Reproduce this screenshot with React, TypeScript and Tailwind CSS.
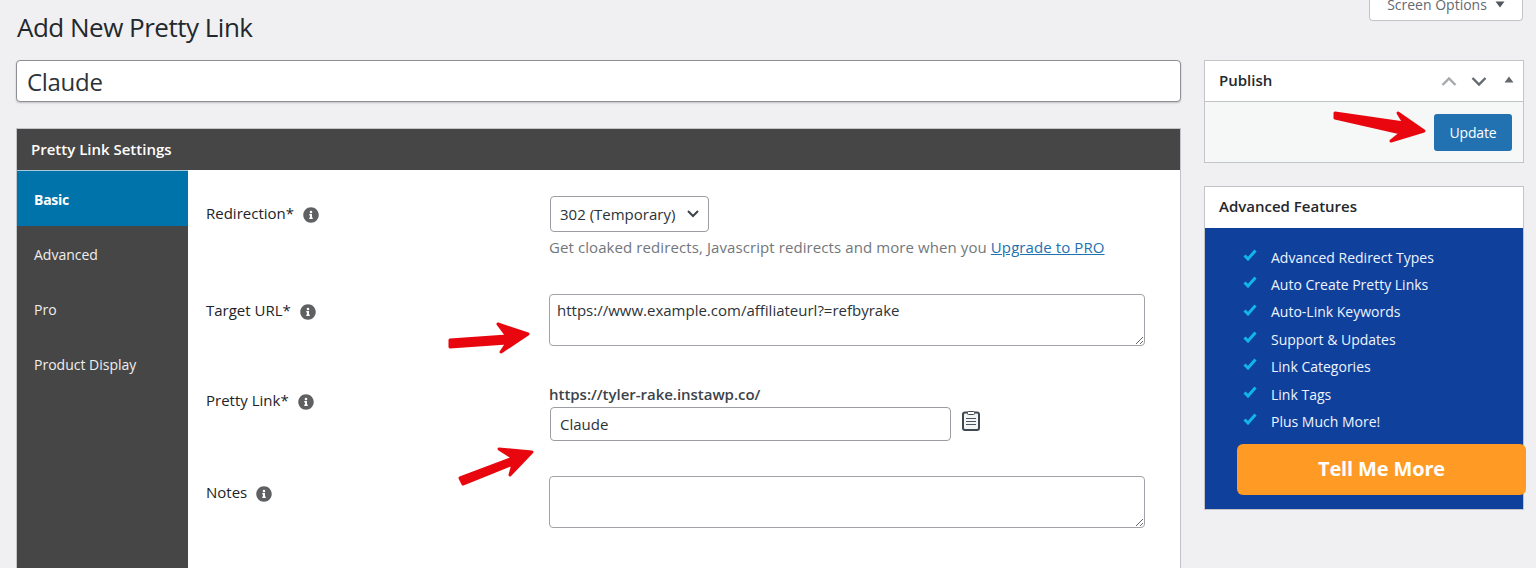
import React from "react";
import { FaInfoCircle } from "react-icons/fa";

const font = "font-['Open_Sans','Noto_Sans',sans-serif]";

function Info({ className = "" }: { className?: string }) {
  return <FaInfoCircle className={`text-[#5f6061] w-[16px] h-[16px] shrink-0 ${className}`} />;
}

function Label({ text, top }: { text: string; top: string }) {
  return (
    <div className={`flex items-start ${top} gap-[9px] text-[15px] leading-[20px] font-medium text-[#1d2327]`}>
      <span>{text}</span>
      <Info className="mt-[3.5px]" />
    </div>
  );
}

function Check() {
  return (
    <svg width="14" height="12" viewBox="0 0 14 12" className="shrink-0 -mt-[5px]">
      <path d="M1.5 6.5 L5 10 L12.5 1.5" fill="none" stroke="#12b5ea" strokeWidth="3" />
    </svg>
  );
}

const features = [
  "Advanced Redirect Types",
  "Auto Create Pretty Links",
  "Auto-Link Keywords",
  "Support & Updates",
  "Link Categories",
  "Link Tags",
  "Plus Much More!",
];

const nav = ["Advanced", "Pro", "Product Display"];

export default function App() {
  return (
    <div className={`relative h-[568px] w-[1536px] overflow-hidden bg-[#f0f0f2] ${font} text-[#2c3338]`}>
      <div className="flex pl-[16px] pr-[12px]">
        <main className="w-[1165px] shrink-0">
          <h1 className="pt-[9px] pl-[1px] h-[60px] text-[26px] leading-[36px] font-normal text-[#23282d] tracking-[-0.5px]">Add New Pretty Link</h1>
          <input
            readOnly
            value="Claude"
            className="block w-full h-[42px] px-[10px] bg-white border border-[#8c8f94] rounded-[4px] text-[24px] text-[#2c3338] tracking-[-0.3px] shadow-[0_1px_2px_rgba(0,0,0,0.2)] outline-none"
          />
          <section className="mt-[26px] bg-white border border-[#c3c4c7]">
            <div className="h-[41px] flex items-center pl-[14px] bg-[#464646] text-white text-[15px] font-semibold">Pretty Link Settings</div>
            <div className="flex h-[420px]">
              <nav className="w-[171px] shrink-0 bg-[#464646] text-[14px] text-[#eeeeee]">
                <div className="h-[56px] flex items-center pl-[17px] pt-[1px] bg-[#0073aa] border-t border-[#a9c9d8] text-white font-bold tracking-[-0.25px]">Basic</div>
                {nav.map((n) => (
                  <div key={n} className="h-[55px] flex items-center pl-[17px] pt-[2px]">{n}</div>
                ))}
              </nav>
              <div className="flex-1 pl-[18px] pt-[26px]">
                <div className="flex h-[98px]">
                  <div className="w-[343px] shrink-0"><Label text="Redirection*" top="mt-[7px]" /></div>
                  <div>
                    <div className="relative ml-[1px] w-[159px] h-[36px]">
                      <select className="block w-full h-full pl-[9px] appearance-none bg-white border border-[#9a9da2] rounded-[4px] text-[15px] text-[#2c3338] outline-none">
                        <option>302 (Temporary)</option>
                      </select>
                      <svg width="14" height="10" viewBox="0 0 14 10" className="absolute right-[9px] top-[13px] pointer-events-none">
                        <path d="M2 2 L7 7 L12 2" fill="none" stroke="#3c434a" strokeWidth="2" />
                      </svg>
                    </div>
                    <p className="mt-[5px] text-[15px] leading-[20px] text-[#72777c] tracking-[0.09px] whitespace-nowrap">
                      Get cloaked redirects, Javascript redirects and more when you <a className="text-[#2271b1] underline">Upgrade to PRO</a>
                    </p>
                  </div>
                </div>
                <div className="flex h-[88px]">
                  <div className="w-[343px] shrink-0"><Label text="Target URL*" top="mt-[6px]" /></div>
                  <textarea
                    readOnly
                    value="https://www.example.com/affiliateurl?=refbyrake"
                    className="block w-[596px] h-[52px] px-[7px] py-[4px] bg-white border border-[#a0a3a8] rounded-[4px] text-[15px] leading-[22px] text-[#2c3338] outline-none"
                  />
                </div>
                <div className="flex h-[94px]">
                  <div className="w-[343px] shrink-0"><Label text="Pretty Link*" top="mt-[8px]" /></div>
                  <div>
                    <div className="mt-[2px] h-[23px] text-[15px] leading-[20px] font-semibold text-[#3c434a] tracking-[-0.03px]">https://tyler-rake.instawp.co/</div>
                    <div className="flex items-start ml-[1px]">
                      <input
                        readOnly
                        value="Claude"
                        className="block w-[401px] h-[34px] px-[9px] bg-white border border-[#9a9da2] rounded-[4px] text-[15px] text-[#2c3338] outline-none"
                      />
                      <svg width="20" height="22" viewBox="0 0 20 22" className="ml-[10px] mt-[3px]">
                        <rect x="2" y="2.5" width="16" height="17.5" rx="2" fill="#f3f4f5" stroke="#3f4752" strokeWidth="2" />
                        <rect x="6.5" y="1.5" width="7" height="3" rx="1" fill="#fff" stroke="#3f4752" strokeWidth="1" />
                        <path d="M5 8.5H15M5 11.5H15M5 14.5H15" stroke="#4c5460" strokeWidth="1.2" />
                      </svg>
                    </div>
                  </div>
                </div>
                <div className="flex">
                  <div className="w-[343px] shrink-0"><Label text="Notes" top="mt-[6px]" /></div>
                  <textarea readOnly className="block w-[596px] h-[52px] bg-white border border-[#a0a3a8] rounded-[4px] outline-none" />
                </div>
              </div>
            </div>
          </section>
        </main>

        <aside className="ml-[23px] w-[320px] shrink-0">
          <div className="h-[21px] -mb-[21px] flex justify-end pr-[1px]">
            <div className="w-[154px] h-[21px] flex items-end justify-center gap-[8px] pb-[5px] bg-white border border-t-0 border-[#c3c4c7] rounded-b-[4px] text-[14px] leading-[20px] text-[#646970]">
              <span>Screen Options</span>
              <svg width="10" height="7" viewBox="0 0 10 7" className="mb-[7px]"><path d="M0.5 0.5H9.5L5 6.5Z" fill="#50575e" /></svg>
            </div>
          </div>

          <div className="mt-[60px] bg-[#f6f7f7] border border-[#c3c4c7]">
            <div className="h-[41px] flex items-center pl-[14px] pr-[9px] bg-white border-b border-[#c3c4c7] text-[15px] font-semibold text-[#23282d]">
              <span className="flex-1 -mt-[2px]">Publish</span>
              <svg width="16" height="11" viewBox="0 0 16 11"><path d="M1.5 9 L8 2.5 L14.5 9" fill="none" stroke="#a7aaad" strokeWidth="2.4" /></svg>
              <svg width="16" height="11" viewBox="0 0 16 11" className="ml-[14px]"><path d="M1.5 2 L8 8.5 L14.5 2" fill="none" stroke="#646970" strokeWidth="2.4" /></svg>
              <svg width="10" height="7" viewBox="0 0 10 7" className="ml-[17px] -mt-[4px]"><path d="M0.5 6.5H9.5L5 0.5Z" fill="#646970" /></svg>
            </div>
            <div className="h-[60px] flex justify-end pt-[12px] pr-[11px]">
              <button className="w-[78px] h-[37px] bg-[#2271b1] rounded-[3px] text-[14px] text-white tracking-[-0.2px]">Update</button>
            </div>
          </div>

          <div className="mt-[23px] bg-white border border-[#c3c4c7]">
            <div className="h-[41px] flex items-center pl-[14px] pb-[2px] text-[15px] font-semibold text-[#23282d]">Advanced Features</div>
            <div className="h-[281px] bg-[#0e409c] pt-[15.5px] pl-[32px]">
              <ul className="text-[14px] leading-[27.4px] text-[#eef4ff]">
                {features.map((f) => (
                  <li key={f} className="flex items-center gap-[14px] pl-[6px]">
                    <Check />
                    <span>{f}</span>
                  </li>
                ))}
              </ul>
              <div className="w-[289px] h-[51px] mt-[8.5px] flex items-center justify-center bg-[#ff9a24] rounded-[6px] text-[20px] font-bold text-white tracking-[-0.15px]">Tell Me More</div>
            </div>
          </div>
        </aside>
      </div>

      <svg width="1536" height="568" viewBox="0 0 1536 568" className="absolute left-0 top-0 pointer-events-none">
        <g fill="#e8060f" stroke="#e8060f" strokeLinejoin="round" strokeLinecap="round" strokeWidth="3">
          <path d="M1335 113 L1404 123 L1398 113 L1424 131 L1391 141 L1401 133 L1335 118 Z" />
          <path d="M450 340 L507 336 L498 324 L528 334 L501 352 L507 343 L450 347 Z" />
          <path d="M460 478 L513 458 L499 449 L532 452 L510 475 L513 464 L463 484 Z" />
        </g>
      </svg>
    </div>
  );
}
